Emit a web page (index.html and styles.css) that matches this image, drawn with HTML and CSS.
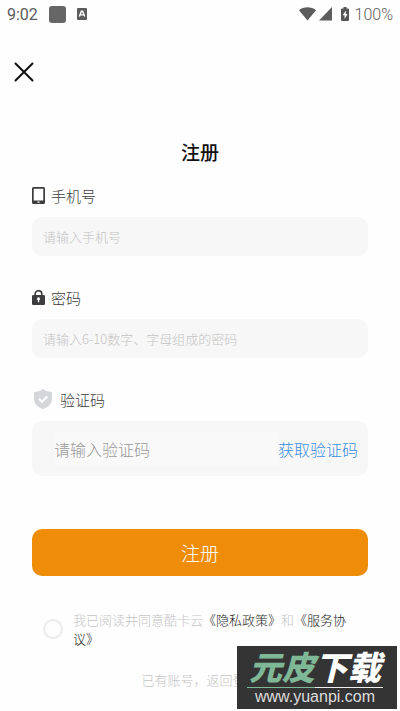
FILE: index.html
```html
<!DOCTYPE html>
<html lang="zh-CN">
<head>
<meta charset="utf-8">
<meta name="viewport" content="width=device-width, initial-scale=1">
<title>注册</title>
<link rel="stylesheet" href="styles.css">
</head>
<body>
<header class="status">
  <span>9:02</span>
  <svg class="status-app" width="17" height="17" viewBox="0 0 17 17" aria-hidden="true"><rect width="17" height="17" rx="3" fill="#666"/></svg>
  <svg class="status-lang" width="10" height="12" viewBox="0 0 10 12" aria-hidden="true"><rect width="10" height="12" rx="1" fill="#5c5c5c"/><path d="M2.3 8.5 4.4 3.3h1.2l2.1 5.2M3.3 6.9h3.4" fill="none" stroke="#fff" stroke-width="1.4"/></svg>
  <span class="status-right">
    <svg width="17" height="14" viewBox="0 0 17 14" aria-hidden="true"><path d="M0 3.2C5 -.6 12 -.6 17 3.2L8.500 13.500z" fill="#5c5c5c"/></svg>
    <svg width="13" height="14" viewBox="0 0 13 14" aria-hidden="true"><path d="M13 0v13.500H0z" fill="#5c5c5c"/></svg>
    <svg class="battery" width="8" height="14" viewBox="0 0 8 14" aria-hidden="true"><path d="M2.500 0h3v1.500H7a1 1 0 0 1 1 1V13a1 1 0 0 1-1 1H1a1 1 0 0 1-1-1V2.500a1 1 0 0 1 1-1h1.500z" fill="#555"/><path d="M4.800 3.600 1.700 8.300h1.900v3.600l2.900-5H4.700z" fill="#fff"/></svg>
    <span class="charge">100%</span>
  </span>
</header>
<main class="page">
  <button class="close" type="button" aria-label="关闭">
    <svg width="20" height="20" viewBox="0 0 20 20"><path d="M1.500 1.500l17 17M18.500 1.500l-17 17" stroke="#111" stroke-width="2" stroke-linecap="round"/></svg>
  </button>
  <h1 class="title">注册</h1>
  <form class="form">
    <div class="field">
      <label class="label" for="phone">
        <svg width="13" height="17" viewBox="0 0 13 17" aria-hidden="true"><path fill-rule="evenodd" d="M1.500 0h10A1.500 1.500 0 0 1 13 1.500v14a1.500 1.500 0 0 1-1.500 1.500h-10A1.500 1.500 0 0 1 0 15.500v-14A1.500 1.500 0 0 1 1.500 0zM1.700 1.700v11.800h9.600V1.700zM5.500 14.500v1.300h2v-1.300z" fill="#3c3c3e"/></svg>
        手机号
      </label>
      <input class="input" id="phone" type="tel" placeholder="请输入手机号">
    </div>
    <div class="field">
      <label class="label" for="password">
        <svg width="13" height="15" viewBox="0 0 13 15" aria-hidden="true"><path d="M3.200 6V4a3.300 3.300 0 0 1 6.600 0v2" fill="none" stroke="#3c3c3e" stroke-width="1.600"/><rect y="5" width="13" height="10" rx="1.200" fill="#3c3c3e"/><circle cx="6.500" cy="8.700" r="1.500" fill="#fff"/><path d="M6.500 9v3.300" stroke="#fff" stroke-width="1.300"/></svg>
        密码
      </label>
      <input class="input" id="password" type="password" placeholder="请输入6-10数字、字母组成的密码">
    </div>
    <div class="field">
      <label class="label label-code" for="code">
        <svg width="18" height="20" viewBox="0 0 18 20" aria-hidden="true"><path d="M9 0c2.500 1.900 5.300 2.800 9 3v7c0 4.800-3.600 8.200-9 10-5.400-1.800-9-5.200-9-10V3c3.700-.2 6.500-1.100 9-3z" fill="#d5d6da"/><path d="M5 9.800l3 3 5.300-5.400" fill="none" stroke="#fff" stroke-width="2.200"/></svg>
        验证码
      </label>
      <div class="code">
        <input class="code-input" id="code" type="text" placeholder="请输入验证码">
        <button class="code-send" type="button">获取验证码</button>
      </div>
    </div>
    <button class="submit" type="submit">注册</button>
    <div class="terms">
      <input class="agree" id="agree" type="checkbox">
      <label for="agree">我已阅读并同意酷卡云<a href="#privacy">《隐私政策》</a>和<a href="#service">《服务协议》</a></label>
    </div>
  </form>
  <a class="login" href="#login">已有账号，返回登录</a>
</main>
<aside class="mark">
  <strong class="mark-name"><span>元皮</span>下载</strong>
  <span class="mark-url">www.yuanpi.com</span>
</aside>
</body>
</html>
```

FILE: styles.css
```css
* {
  box-sizing: border-box;
}

body {
  margin: 0;
  min-height: 100vh;
  position: relative;
  background: #fefefe;
  color: #3c3c3c;
  font-family: "Noto Sans CJK SC", sans-serif;
  font-size: 13px;
  font-weight: 300;
}

button,
input {
  margin: 0;
  padding: 0;
  border: 0;
  background: none;
  font-family: inherit;
  font-weight: inherit;
}

a {
  color: inherit;
  text-decoration: none;
}

svg {
  display: block;
  flex: none;
}

/* Status bar */
.status {
  display: flex;
  align-items: center;
  height: 28px;
  padding: 0 7px;
  color: #5c5c5c;
  font-family: Roboto, sans-serif;
  font-size: 16px;
  font-weight: 400;
}

.status-app {
  margin-left: 11px;
}

.status-lang {
  margin-left: 11px;
}

.status-right {
  display: flex;
  align-items: center;
  gap: 3px;
  margin-left: auto;
}

.battery {
  margin-left: 6px;
}

.charge {
  margin-left: 3px;
  font-weight: 300;
}

/* Page */
.page {
  display: flex;
  flex-direction: column;
  padding: 34px 32px 0;
}

.close {
  align-self: flex-start;
  margin-left: -18px;
  cursor: pointer;
}

.title {
  margin: 56px 0 18px;
  color: #111;
  font-size: 19px;
  font-weight: 500;
  line-height: 28px;
  text-align: center;
}

.form {
  display: flex;
  flex-direction: column;
}

.field {
  display: flex;
  flex-direction: column;
  gap: 11px;
  margin-bottom: 30px;
}

.label {
  display: flex;
  align-items: center;
  gap: 6px;
  height: 22px;
  font-size: 15px;
}

.label-code {
  gap: 8px;
  padding-left: 2px;
}

.input {
  width: 100%;
  height: 39px;
  padding: 0 11px;
  border-radius: 10px;
  background: #f7f7f7;
  font-size: 13px;
}

.input::placeholder {
  color: #c4c4c4;
}

.code {
  display: flex;
  align-items: center;
  height: 55px;
  padding: 0 10px 0 22px;
  border-radius: 10px;
  background: #f7f7f7;
}

.code-input {
  flex: 1;
  min-width: 0;
  height: 34px;
  background: #f9f9f9;
  font-size: 16px;
}

.code-input::placeholder {
  color: #999;
}

.code-send {
  color: #3b8ee0;
  font-size: 16px;
}

.submit {
  height: 47px;
  margin-top: 23px;
  border-radius: 10px;
  background: #ef8d09;
  color: #fff;
  font-size: 19px;
}

.terms {
  display: flex;
  align-items: center;
  gap: 10px;
  margin-top: 34px;
  padding: 0 11px;
  color: #c4c4c4;
  line-height: 19px;
}

.terms a {
  color: #222;
}

.agree {
  flex: none;
  appearance: none;
  width: 20px;
  height: 20px;
  border: 2px solid #ebebeb;
  border-radius: 50%;
}

.login {
  align-self: center;
  margin-top: 22px;
  color: #c4c4c4;
  line-height: 19px;
}

/* Site mark over the bottom corner */
.mark {
  position: absolute;
  right: 3px;
  bottom: 2px;
  display: flex;
  flex-direction: column;
  align-items: center;
  width: 160px;
  height: 63px;
  padding: 6px 4px 0 0;
  background: #2d2d2df7;
  color: #fff;
}

.mark-name {
  height: 36px;
  padding: 0 2px;
  border-bottom: 1px solid;
  border-image: linear-gradient(90deg, #7fb896 50%, #eee 50%) 1;
  font-size: 33px;
  font-style: italic;
  font-weight: 900;
  line-height: 28px;
}

.mark-name span {
  color: #7fb896;
}

.mark-url {
  color: #ddd;
  font-family: "Liberation Sans", sans-serif;
  font-size: 16px;
  font-weight: 400;
  line-height: 18px;
}
```
